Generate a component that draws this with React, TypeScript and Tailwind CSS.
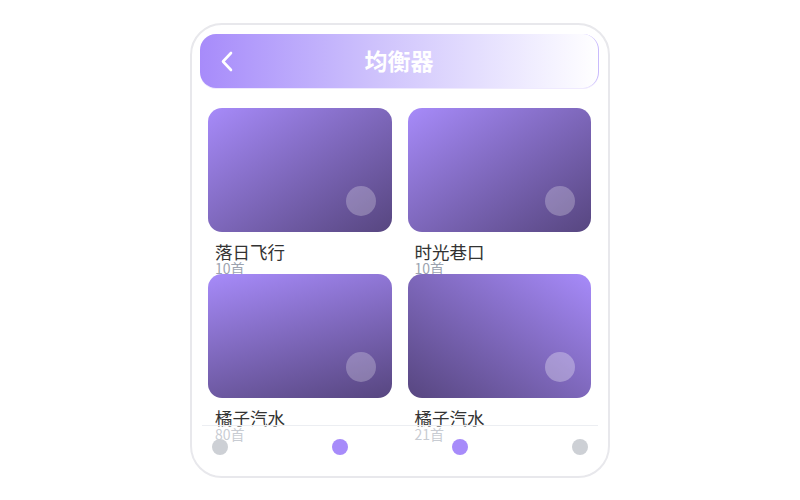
import React from 'react';

type Album = {
  title: string;
  count: string;
  bg: string;
  dot: string;
};

const albums: Album[] = [
  { title: '落日飞行', count: '10首', bg: 'bg-linear-to-br from-[#a78bfa] to-[#574680]', dot: 'bg-white/25' },
  { title: '时光巷口', count: '10首', bg: 'bg-linear-to-br from-[#a78bfa] to-[#574680]', dot: 'bg-white/25' },
  { title: '橘子汽水', count: '80首', bg: 'bg-linear-165 from-[#a78bfa] to-[#574680]', dot: 'bg-white/25' },
  { title: '橘子汽水', count: '21首', bg: 'bg-linear-to-bl from-[#a78bfa] to-[#574680]', dot: 'bg-white/30' },
];

const dots = ['bg-[#cdd0d5]', 'bg-[#a78bfa]', 'bg-[#a78bfa]', 'bg-[#cdd0d5]'];

const AlbumCard: React.FC<{ album: Album }> = ({ album }) => (
  <div className="h-[166px]">
    <div className={`relative h-[124px] rounded-[14px] ${album.bg}`}>
      <div className={`absolute right-4 bottom-4 h-[30px] w-[30px] rounded-full ${album.dot}`} />
    </div>
    <div className="mt-[10px] pl-[7px] text-[17.5px] leading-[19px] text-[#333333]">{album.title}</div>
    <div className="pl-[7px] text-[14px] leading-[14px] text-[#9ca3af]">{album.count}</div>
  </div>
);

const App: React.FC = () => {
  return (
    <div
      className="flex h-[500px] w-full items-center justify-center bg-white"
      style={{ fontFamily: '"Noto Sans CJK SC", "Noto Sans", sans-serif' }}
    >
      <div className="relative h-[455px] w-[420px] overflow-hidden rounded-[32px] border-2 border-[#e8e8ec] bg-white">
        {/* Header */}
        <div className="relative mt-[9px] ml-2 mr-[9px] flex h-[54px] items-center justify-center rounded-2xl border-r border-r-[#c9bbfc] bg-linear-to-r from-[#a78bfa] via-[#cfc3fc] via-45% to-white shadow-[0_1px_0_#efeafe]">
          <svg
            className="absolute left-[20px] top-[17px]"
            width="14"
            height="21"
            viewBox="0 0 14 21"
            fill="none"
            stroke="white"
            strokeWidth="2.6"
            strokeLinecap="round"
            strokeLinejoin="round"
          >
            <path d="M11 2 L3 10.5 L11 19" />
          </svg>
          <h1 className="text-[23px] font-bold leading-none text-white">均衡器</h1>
        </div>

        {/* Albums */}
        <div className="mt-5 grid grid-cols-2 gap-x-4 pl-4 pr-[17px]">
          {albums.map((album, i) => (
            <AlbumCard key={i} album={album} />
          ))}
        </div>

        {/* Bottom nav */}
        <div className="absolute right-[10px] bottom-0 left-[10px] h-[51px] border-t border-[#eceef2] bg-white/45">
          <div className="flex justify-between px-[10px] pt-[13px]">
            {dots.map((d, i) => (
              <span key={i} className={`h-4 w-4 rounded-full ${d}`} />
            ))}
          </div>
        </div>
      </div>
    </div>
  );
};

export default App;
